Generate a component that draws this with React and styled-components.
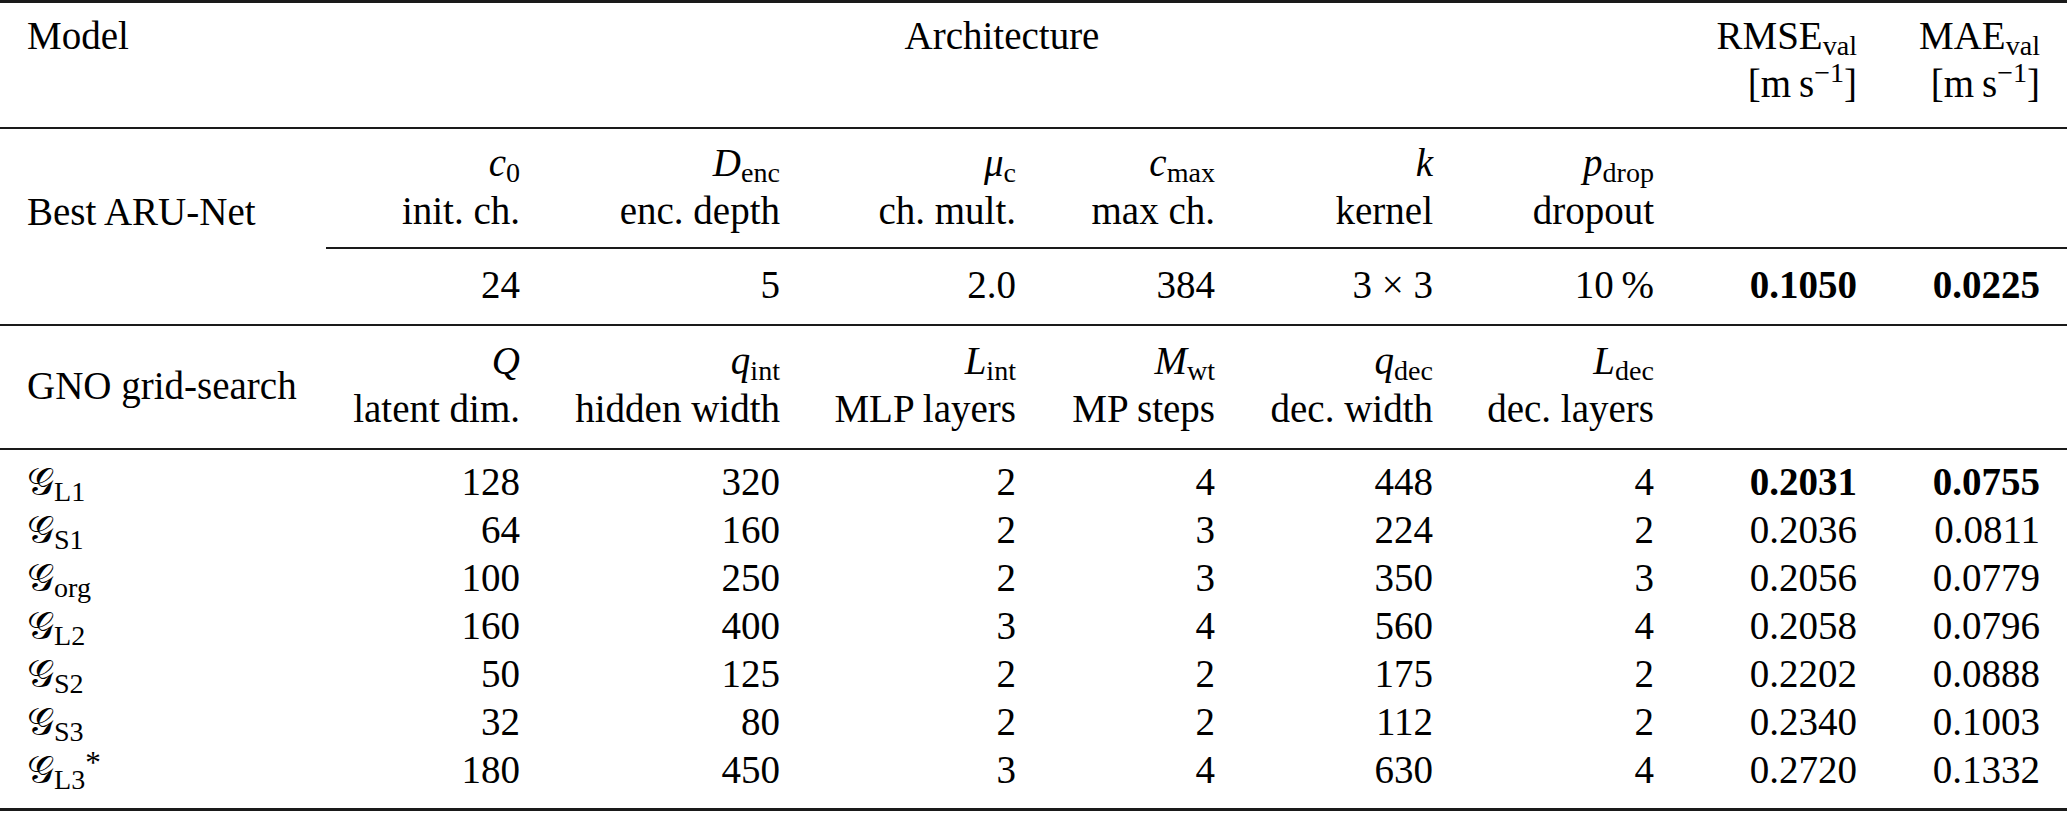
import React from "react";
import styled, { createGlobalStyle } from "styled-components";

const GlobalStyle = createGlobalStyle`
  html, body { margin: 0; padding: 0; background: #ffffff; }
  body { font-family: "Liberation Serif", "Times New Roman", serif; color: #000; }
`;

const COLS = "326px 218px 260px 236px 199px 218px 221px 203px 186px";
const RULE = "#1a1a1a";

const Table = styled.div`
  width: 2067px;
  border-top: 3px solid ${RULE};
  border-bottom: 3px solid ${RULE};
  font-family: "Liberation Serif", "Times New Roman", serif;
  font-size: 39px;
  line-height: 48px;
`;

const Section = styled.div`
  display: grid;
  grid-template-columns: ${COLS};
  padding-top: ${(p) => p.$pt}px;
  padding-bottom: ${(p) => p.$pb}px;
  border-bottom: ${(p) => (p.$rule ? `2px solid ${RULE}` : "none")};
`;

const Row = styled.div`
  display: contents;
`;

const Cell = styled.div`
  grid-column: span ${(p) => p.$span || 1};
  text-align: ${(p) => p.$align || "right"};
  padding: 0 ${(p) => (p.$last ? 27 : 24)}px 0 ${(p) => (p.$first ? 27 : 24)}px;
  padding-top: ${(p) => p.$offset || 0}px;
  height: ${(p) => (p.$fixed ? "48px" : "auto")};
  white-space: nowrap;
  font-weight: ${(p) => (p.$bold ? 700 : 400)};
`;

const Line = styled.div`
  height: 48px;
`;

const CMidRule = styled.div`
  height: 2px;
  margin-left: 326px;
  background: ${RULE};
`;

const MI = styled.span`
  font-style: italic;
`;

const Sub = styled.span`
  font-size: 0.72em;
  font-style: normal;
  line-height: 0;
  vertical-align: -0.2em;
`;

const Sup = styled.span`
  font-size: ${(p) => (p.$big ? "0.8em" : "0.72em")};
  font-style: normal;
  line-height: 0;
  vertical-align: ${(p) => (p.$big ? "0.32em" : "0.55em")};
`;

const Cal = styled.span`
  font-family: "DejaVu Serif", "DejaVu Sans", "Noto Sans", serif;
  font-style: normal;
  font-size: 0.98em;
  line-height: 0;
`;

const Units = () => (
  <>
    [m{"\u2009"}s<Sup>−1</Sup>]
  </>
);

const Param = ({ sym, label }) => (
  <Cell>
    <Line>{sym}</Line>
    <Line>{label}</Line>
  </Cell>
);

const m = (base, sub) => (
  <>
    <MI>{base}</MI>
    <Sub>{sub}</Sub>
  </>
);

const bestParams = [
  [m("c", "0"), "init. ch."],
  [m("D", "enc"), "enc. depth"],
  [m("μ", "c"), "ch. mult."],
  [m("c", "max"), "max ch."],
  [<MI key="k">k</MI>, "kernel"],
  [m("p", "drop"), "dropout"],
];

const gnoParams = [
  [<MI key="q">Q</MI>, "latent dim."],
  [m("q", "int"), "hidden width"],
  [m("L", "int"), "MLP layers"],
  [m("M", "wt"), "MP steps"],
  [m("q", "dec"), "dec. width"],
  [m("L", "dec"), "dec. layers"],
];

const gnoRows = [
  ["L1", false, ["128", "320", "2", "4", "448", "4"], "0.2031", "0.0755", true],
  ["S1", false, ["64", "160", "2", "3", "224", "2"], "0.2036", "0.0811", false],
  ["org", false, ["100", "250", "2", "3", "350", "3"], "0.2056", "0.0779", false],
  ["L2", false, ["160", "400", "3", "4", "560", "4"], "0.2058", "0.0796", false],
  ["S2", false, ["50", "125", "2", "2", "175", "2"], "0.2202", "0.0888", false],
  ["S3", false, ["32", "80", "2", "2", "112", "2"], "0.2340", "0.1003", false],
  ["L3", true, ["180", "450", "3", "4", "630", "4"], "0.2720", "0.1332", false],
];

export default function App() {
  return (
    <>
      <GlobalStyle />
      <Table>
        <Section $pt={9} $pb={19} $rule>
          <Cell $first $align="left">
            <Line>Model</Line>
          </Cell>
          <Cell $span={6} $align="center">
            <Line>Architecture</Line>
          </Cell>
          <Cell>
            <Line>
              RMSE<Sub>val</Sub>
            </Line>
            <Line>
              <Units />
            </Line>
          </Cell>
          <Cell $last>
            <Line>
              MAE<Sub>val</Sub>
            </Line>
            <Line>
              <Units />
            </Line>
          </Cell>
        </Section>

        <Section $pt={9.5} $pb={11.5}>
          <Cell $first $align="left" $offset={49}>
            Best ARU-Net
          </Cell>
          {bestParams.map(([sym, label], i) => (
            <Param key={i} sym={sym} label={label} />
          ))}
          <Cell />
          <Cell $last />
        </Section>
        <CMidRule />
        <Section $pt={11.5} $pb={15.5} $rule>
          <Cell $first />
          <Cell>24</Cell>
          <Cell>5</Cell>
          <Cell>2.0</Cell>
          <Cell>384</Cell>
          <Cell>3 × 3</Cell>
          <Cell>10{"\u2009"}%</Cell>
          <Cell $bold>0.1050</Cell>
          <Cell $bold $last>
            0.0225
          </Cell>
        </Section>

        <Section $pt={10.5} $pb={15.5} $rule>
          <Cell $first $align="left" $offset={25}>
            GNO grid-search
          </Cell>
          {gnoParams.map(([sym, label], i) => (
            <Param key={i} sym={sym} label={label} />
          ))}
          <Cell />
          <Cell $last />
        </Section>

        <Section $pt={7.5} $pb={14.5}>
          {gnoRows.map(([sub, star, vals, rmse, mae, bold]) => (
            <Row key={sub}>
              <Cell $first $fixed $align="left">
                <Cal>𝒢</Cal>
                <Sub>{sub}</Sub>
                {star && <Sup $big>*</Sup>}
              </Cell>
              {vals.map((v, i) => (
                <Cell key={i} $fixed>
                  {v}
                </Cell>
              ))}
              <Cell $fixed $bold={bold}>
                {rmse}
              </Cell>
              <Cell $fixed $bold={bold} $last>
                {mae}
              </Cell>
            </Row>
          ))}
        </Section>
      </Table>
    </>
  );
}
